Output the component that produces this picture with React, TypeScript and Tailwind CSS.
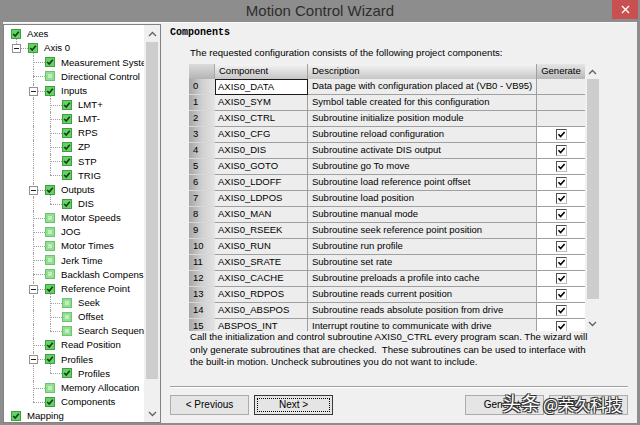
import React from "react";

type Node = { label: string; level: number; checked: boolean; exp?: boolean; last?: boolean };

const nodes: Node[] = [
  { label: "Axes", level: 0, checked: true, exp: true },
  { label: "Axis 0", level: 1, checked: true, exp: true, last: true },
  { label: "Measurement System", level: 2, checked: true },
  { label: "Directional Control", level: 2, checked: false },
  { label: "Inputs", level: 2, checked: true, exp: true },
  { label: "LMT+", level: 3, checked: true },
  { label: "LMT-", level: 3, checked: true },
  { label: "RPS", level: 3, checked: true },
  { label: "ZP", level: 3, checked: true },
  { label: "STP", level: 3, checked: true },
  { label: "TRIG", level: 3, checked: true, last: true },
  { label: "Outputs", level: 2, checked: true, exp: true },
  { label: "DIS", level: 3, checked: true, last: true },
  { label: "Motor Speeds", level: 2, checked: false },
  { label: "JOG", level: 2, checked: false },
  { label: "Motor Times", level: 2, checked: false },
  { label: "Jerk Time", level: 2, checked: false },
  { label: "Backlash Compensation", level: 2, checked: false },
  { label: "Reference Point", level: 2, checked: true, exp: true },
  { label: "Seek", level: 3, checked: false },
  { label: "Offset", level: 3, checked: false },
  { label: "Search Sequence", level: 3, checked: false, last: true },
  { label: "Read Position", level: 2, checked: true },
  { label: "Profiles", level: 2, checked: true, exp: true },
  { label: "Profiles", level: 3, checked: true, last: true },
  { label: "Memory Allocation", level: 2, checked: false },
  { label: "Components", level: 2, checked: true, last: true },
  { label: "Mapping", level: 0, checked: true },
];

const padClass = ["pl-[7px]", "pl-[24px]", "pl-[41px]", "pl-[58px]"];
const lineLeft = ["left-[12px]", "left-[29px]", "left-[46px]", "left-[63px]"];
const expLeft = ["left-[8px]", "left-[25px]", "left-[42px]"];

const rows: [string, string, boolean][] = [
  ["AXIS0_DATA", "Data page with configuration placed at (VB0 - VB95)", false],
  ["AXIS0_SYM", "Symbol table created for this configuration", false],
  ["AXIS0_CTRL", "Subroutine initialize position module", false],
  ["AXIS0_CFG", "Subroutine reload configuration", true],
  ["AXIS0_DIS", "Subroutine activate DIS output", true],
  ["AXIS0_GOTO", "Subroutine go To move", true],
  ["AXIS0_LDOFF", "Subroutine load reference point offset", true],
  ["AXIS0_LDPOS", "Subroutine load position", true],
  ["AXIS0_MAN", "Subroutine manual mode", true],
  ["AXIS0_RSEEK", "Subroutine seek reference point position", true],
  ["AXIS0_RUN", "Subroutine run profile", true],
  ["AXIS0_SRATE", "Subroutine set rate", true],
  ["AXIS0_CACHE", "Subroutine preloads a profile into cache", true],
  ["AXIS0_RDPOS", "Subroutine reads current position", true],
  ["AXIS0_ABSPOS", "Subroutine reads absolute position from drive", true],
  ["ABSPOS_INT", "Interrupt routine to communicate with drive", true],
];

function Chevron({ down }: { down?: boolean }) {
  return (
    <svg width="9" height="6" viewBox="0 0 9 6">
      <polyline
        points={down ? "1,1 4.5,4.5 8,1" : "1,5 4.5,1.5 8,5"}
        fill="none"
        stroke="#606060"
        strokeWidth="1.3"
      />
    </svg>
  );
}

function GreenBox({ checked }: { checked: boolean }) {
  if (checked) {
    return (
      <div className="relative z-10 w-[10px] h-[10px] shrink-0 border border-[#3f9f3f] bg-[#66d166] flex items-center justify-center">
        <svg width="8" height="8" viewBox="0 0 8 8">
          <path d="M1.2 4 L3.2 6 L6.8 1.8" fill="none" stroke="#0f3f0f" strokeWidth="1.6" />
        </svg>
      </div>
    );
  }
  return (
    <div className="relative z-10 w-[10px] h-[10px] shrink-0 border border-[#6cc46c] bg-[#94dd94] flex items-center justify-center">
      <div className="w-[4px] h-[4px] bg-[#bff0b8]" />
    </div>
  );
}

function TreeRow({ n }: { n: Node }) {
  const L = n.level;
  return (
    <div className={`relative h-[14.15px] flex items-center shrink-0 ${padClass[L]}`}>
      {L === 3 && (
        <div className="absolute left-[29px] top-0 h-full w-0 border-l border-dotted border-[#a0a0a0]" />
      )}
      {L >= 1 && (
        <>
          <div
            className={`absolute ${lineLeft[L - 1]} top-0 w-0 border-l border-dotted border-[#a0a0a0] ${
              n.last ? "h-[7px]" : "h-full"
            }`}
          />
          <div
            className={`absolute ${lineLeft[L - 1]} top-[7px] w-[12px] h-0 border-t border-dotted border-[#a0a0a0]`}
          />
        </>
      )}
      {n.exp && L < 3 && (
        <div
          className={`absolute ${lineLeft[L]} top-[7px] h-[8px] w-0 border-l border-dotted border-[#a0a0a0]`}
        />
      )}
      {n.exp && L >= 1 && (
        <div
          className={`absolute ${expLeft[L - 1]} top-[3px] z-10 w-[9px] h-[9px] border border-[#919191] bg-white flex items-center justify-center`}
        >
          <div className="w-[5px] h-px bg-[#222]" />
        </div>
      )}
      <GreenBox checked={n.checked} />
      <span className="ml-[6px] whitespace-nowrap text-[9.6px] text-black leading-none">{n.label}</span>
    </div>
  );
}

function GenCheck() {
  return (
    <div className="w-[11px] h-[11px] bg-white border-t border-l border-t-[#505050] border-l-[#505050] border-b border-r border-b-[#bdbdbd] border-r-[#bdbdbd] flex items-center justify-center">
      <svg width="9" height="9" viewBox="0 0 9 9">
        <path d="M1.5 4.3 L3.6 6.6 L7.6 2" fill="none" stroke="#000" strokeWidth="1.6" />
      </svg>
    </div>
  );
}

export default function App() {
  return (
    <div className="w-[640px] h-[425px] bg-[#8d8d8d] flex flex-col overflow-hidden relative font-['Liberation_Sans',Arial,sans-serif] text-black">
      {/* Title bar */}
      <div className="h-[22px] shrink-0 flex items-center justify-center relative">
        <span className="text-[15px] text-[#2e2e2e] leading-none mt-[-2px]">Motion Control Wizard</span>
        <div className="absolute right-[2px] top-0 w-[26px] h-[19px] bg-[#c75050] flex items-center justify-center">
          <svg width="9" height="9" viewBox="0 0 9 9">
            <path d="M1 1 L8 8 M8 1 L1 8" stroke="#fff" strokeWidth="1.3" />
          </svg>
        </div>
      </div>

      {/* Content */}
      <div className="flex-1 mx-[3px] mb-[2px] bg-[#f0f0f0] border-t border-[#fafafa] flex min-h-0">
        {/* Tree */}
        <div className="w-[158px] shrink-0 mt-[1px] border border-[#828282] bg-white flex min-h-0">
          <div className="flex-1 overflow-hidden pt-[2px] flex flex-col">
            {nodes.map((n, i) => (
              <TreeRow key={i} n={n} />
            ))}
          </div>
          <div className="w-[16px] shrink-0 bg-[#f0f0f0] flex flex-col">
            <div className="h-[17px] flex items-center justify-center">
              <Chevron />
            </div>
            <div className="h-[337px] mx-[2px] bg-[#cdcdcd]" />
            <div className="flex-1" />
            <div className="h-[17px] flex items-center justify-center">
              <Chevron down />
            </div>
          </div>
        </div>

        {/* Right panel */}
        <div className="flex-1 pl-[9px] pt-[4px] flex flex-col min-w-0">
          <div className="h-[11px] leading-[11px] text-[10px] font-bold font-['Liberation_Mono','Courier_New',monospace]">
            Components
          </div>
          <div className="mt-[9px] ml-[20px] leading-[12px] text-[9.6px] whitespace-nowrap">
            The requested configuration consists of the following project components:
          </div>

          {/* Table */}
          <div className="mt-[5px] ml-[19px] h-[267px] flex">
            <div className="w-[396px] overflow-hidden flex flex-col text-[9.5px]">
              <div className="h-[15px] flex shrink-0">
                <div className="w-[26px] bg-linear-to-b from-[#dcdcdc] to-[#b4b4b4] border-r border-[#a8a8a8]" />
                <div className="w-[93px] bg-linear-to-b from-[#f4f4f4] to-[#c6c6c6] border-r border-[#a0a0a0] pl-[4px] flex items-center">
                  Component
                </div>
                <div className="w-[229px] bg-linear-to-b from-[#f4f4f4] to-[#c6c6c6] border-r border-[#a0a0a0] pl-[4px] flex items-center">
                  Description
                </div>
                <div className="w-[48px] bg-linear-to-b from-[#e6e6e6] to-[#b8b8b8] flex items-center justify-center">
                  Generate
                </div>
              </div>
              {rows.map(([c, d, g], i) => (
                <div key={i} className="h-[16px] flex shrink-0">
                  <div className="w-[26px] bg-linear-to-r from-[#a6a6a6] via-[#d0d0d0] to-[#e4e4e4] border-b border-[#d8d8d8] pl-[4px] flex items-center">
                    {i}
                  </div>
                  {i === 0 ? (
                    <div className="w-[93px] bg-white border border-[#1a1a1a] pl-[2px] flex items-center whitespace-nowrap overflow-hidden">
                      {c}
                    </div>
                  ) : (
                    <div className="w-[93px] bg-[#ededed] border-b border-r border-[#a0a0a0] pl-[3px] flex items-center whitespace-nowrap overflow-hidden">
                      {c}
                    </div>
                  )}
                  <div className="w-[229px] bg-[#ededed] border-b border-r border-[#a0a0a0] pl-[4px] flex items-center whitespace-nowrap overflow-hidden">
                    {d}
                  </div>
                  <div
                    className={`w-[48px] border-b border-[#a0a0a0] flex items-center justify-center ${
                      g ? "bg-white" : "bg-[#ededed]"
                    }`}
                  >
                    {g && <GenCheck />}
                  </div>
                </div>
              ))}
            </div>
            <div className="w-[15px] flex flex-col bg-[#f0f0f0]">
              <div className="h-[15px] flex items-center justify-center">
                <Chevron />
              </div>
              <div className="h-[220px] ml-[2px] w-[12px] bg-[#cdcdcd]" />
              <div className="flex-1" />
              <div className="h-[15px] flex items-center justify-center">
                <Chevron down />
              </div>
            </div>
          </div>

          <div className="ml-[20px] text-[9.6px] leading-[12.5px] whitespace-pre">
            <div>Call the initialization and control subroutine AXIS0_CTRL every program scan. The wizard will</div>
            <div>only generate subroutines that are checked.  These subroutines can be used to interface with</div>
            <div>the built-in motion. Uncheck subroutines you do not want to include.</div>
          </div>

          <div className="mt-[17px] w-[458px] h-[2px] border-t border-[#a0a0a0] border-b border-b-white" />

          <div className="mt-[7px] w-[458px] flex h-[20px] text-[10px]">
            <div className="w-[79px] h-[20px] border border-[#acacac] bg-[#e5e5e5] flex items-center justify-center">
              &lt; Previous
            </div>
            <div className="ml-[5px] w-[79px] h-[20px] border border-[#3a3a3a] bg-[#e5e5e5] flex items-center justify-center outline-1 outline-dotted outline-black -outline-offset-4">
              Next &gt;
            </div>
            <div className="flex-1" />
            <div className="w-[79px] h-[20px] border border-[#acacac] bg-[#e5e5e5] flex items-center justify-center">
              Generate
            </div>
            <div className="ml-[5px] w-[79px] h-[20px] border border-[#acacac] bg-[#e5e5e5] flex items-center justify-center">
              Cancel
            </div>
          </div>
        </div>
      </div>

      {/* Watermark */}
      <div className="absolute left-[502px] top-[393px] flex items-end text-white font-['Noto_Sans_CJK_SC',sans-serif] [text-shadow:1px_1px_0_#333,-1px_-1px_0_#333,1px_-1px_0_#333,-1px_1px_0_#333] leading-none">
        <span className="text-[19px]">头条</span>
        <span className="ml-[3px] text-[16px]">@荣久科技</span>
      </div>
    </div>
  );
}
